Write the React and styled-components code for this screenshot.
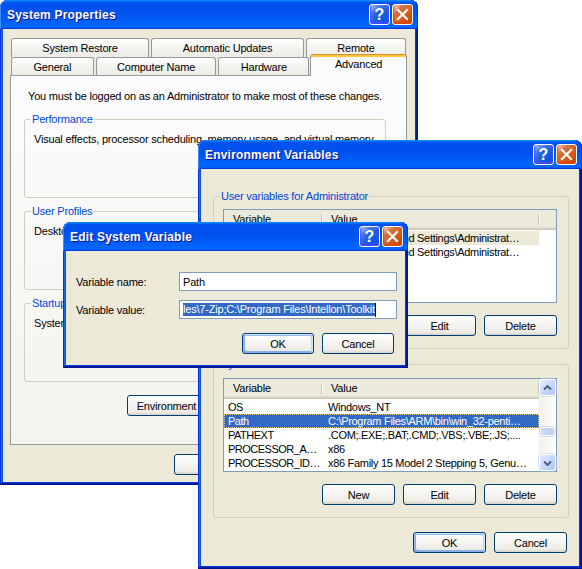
import React from 'react'
import styled, { createGlobalStyle } from 'styled-components'

const GlobalStyle = createGlobalStyle`
    html, body {
        margin: 0;
        padding: 0;
        background: #fff;
    }
    body {
        font-family: "Liberation Sans", Arial, sans-serif;
        font-size: 11px;
        letter-spacing: -0.2px;
        color: #000;
    }
`

const Desktop = styled.div`
    position: relative;
    width: 582px;
    height: 569px;
    overflow: hidden;
    background: #fff;
`

// windows sit on the desktop at their own coordinates
const Frame = styled.div`
    position: absolute;
    left: ${p => p.$x}px;
    top: ${p => p.$y}px;
    width: ${p => p.$w}px;
    height: ${p => p.$h}px;
    box-sizing: border-box;
    display: flex;
    flex-direction: column;
    padding: 0 3px 3px;
    background: #0831d9;
    border-radius: 8px 8px 0 0;
    box-shadow: inset -1px -1px #00138c, inset 1px 1px #0831d9, inset -2px -2px #001ea0, inset 2px 2px #166aee, inset -3px -3px #003bda, inset 3px 3px #0855dd;
`

const TitleBar = styled.div`
    flex: none;
    height: 29px;
    margin: 0 -3px;
    padding: 0 5px 0 7px;
    display: flex;
    align-items: center;
    justify-content: space-between;
    border-radius: 8px 8px 0 0;
    background: linear-gradient(180deg, #0997ff, #0053ee 8%, #0050ee 40%, #06f 88%, #06f 93%, #005bff 95%, #003dd7 96%, #003dd7);
    box-shadow: inset 1px 0 #3c8cfc, inset -1px 0 #003dd7;
`

const Title = styled.span`
    font: bold 12px "Liberation Sans", Arial, sans-serif;
    color: #fff;
    letter-spacing: 0.2px;
    text-shadow: 1px 1px #0f1089;
`

const Controls = styled.div`
    display: flex;
    gap: 2px;
`

const CapButton = styled.div`
    box-sizing: border-box;
    width: 21px;
    height: 21px;
    border: 1px solid #fff;
    border-radius: 3px;
    display: flex;
    align-items: center;
    justify-content: center;
    color: #fff;
    font: bold 16px "Liberation Sans", Arial, sans-serif;
    letter-spacing: 0;
    background-image: ${p => p.$close
        ? 'radial-gradient(circle at 90% 90%, #cc4600 0%, #dc6527 55%, #cd7546 70%, #ffccb2 90%, #fff 100%)'
        : 'radial-gradient(circle at 90% 90%, #0054e9 0%, #2263d5 55%, #4479e4 70%, #a3bbec 90%, #fff 100%)'};
    box-shadow: inset 0 -1px 2px 1px ${p => p.$close ? '#da4600' : '#4646ff'};
`

const Body = styled.div`
    flex: 1;
    display: flex;
    flex-direction: column;
    background: #ece9d8;
    min-height: 0;
`

const PushButton = styled.div`
    box-sizing: border-box;
    flex: none;
    width: ${p => p.$w || 73}px;
    height: 21px;
    display: flex;
    align-items: center;
    justify-content: center;
    white-space: nowrap;
    overflow: hidden;
    border: 1px solid #003c74;
    border-radius: 3px;
    background: linear-gradient(180deg, #fff, #ecebe6 86%, #d6d0c5);
    box-shadow: ${p => p.$primary
        ? 'inset -1px 1px #cee7ff, inset 1px 2px #98b8ea, inset -2px 2px #bcd4f6, inset 1px -1px #89ade4, inset 2px -2px #89ade4'
        : 'none'};
`

const ButtonRow = styled.div`
    display: flex;
    justify-content: flex-end;
    gap: ${p => p.$gap || 8}px;
    margin-top: ${p => p.$top || 0}px;
    padding-right: ${p => p.$right || 0}px;
`

const Group = styled.fieldset`
    margin: ${p => p.$top || 0}px 0 0;
    padding: ${p => p.$pt || 5}px 11px ${p => p.$pb || 12}px 9px;
    border: 1px solid #d0d0bf;
    border-radius: 3px;
    min-width: 0;
`

const Legend = styled.legend`
    padding: 0 1px;
    margin-left: -3px;
    line-height: 13px;
    color: #0046d5;
`

const GroupText = styled.div`
    line-height: 13px;
    white-space: nowrap;
`

/* ---------- System Properties ---------- */

const SysBody = styled(Body)`
    padding: 9px 8px 0 7px;
`

const TabRow = styled.div`
    display: flex;
    gap: 2px;
    padding-left: 1px;
    height: ${p => p.$h}px;
`

const Tab = styled.div`
    box-sizing: border-box;
    width: ${p => p.$w}px;
    display: flex;
    align-items: center;
    justify-content: center;
    border: 1px solid #919b9c;
    border-bottom: none;
    border-radius: 3px 3px 0 0;
    background: linear-gradient(180deg, #fff, #f3f3ef 50%, #ecebe6);
`

const ActiveTab = styled(Tab)`
    position: relative;
    z-index: 1;
    height: 22px;
    margin: -3px 0 -1px -1px;
    padding-bottom: 3px;
    border-top-color: #e68b2c;
    background: #fcfcfe;
    box-shadow: inset 0 2px #ffc83c;
`

const TabPanel = styled.div`
    box-sizing: border-box;
    height: 370px;
    display: flex;
    flex-direction: column;
    padding: 14px 20px 0 13px;
    border: 1px solid #919b9c;
    background: linear-gradient(180deg, #fcfcfe, #f4f3ee);
`

const Notice = styled.div`
    line-height: 13px;
    margin: 0 0 10px 4px;
    white-space: nowrap;
`

const SystemProperties = () => (
    <Window x={0} y={0} w={418} h={485} title="System Properties">
        <SysBody>
            <TabRow $h={19}>
                <Tab $w={138}>System Restore</Tab>
                <Tab $w={153}>Automatic Updates</Tab>
                <Tab $w={100}>Remote</Tab>
            </TabRow>
            <TabRow $h={18}>
                <Tab $w={83}>General</Tab>
                <Tab $w={121}>Computer Name</Tab>
                <Tab $w={91}>Hardware</Tab>
                <ActiveTab $w={97}>Advanced</ActiveTab>
            </TabRow>
            <TabPanel>
                <Notice>You must be logged on as an Administrator to make most of these changes.</Notice>
                <Group $pt={7} $pb={13}>
                    <Legend>Performance</Legend>
                    <GroupText>Visual effects, processor scheduling, memory usage, and virtual memory</GroupText>
                    <ButtonRow $top={17}><PushButton $w={75}>Settings</PushButton></ButtonRow>
                </Group>
                <Group $top={7} $pt={7} $pb={13}>
                    <Legend>User Profiles</Legend>
                    <GroupText>Desktop settings related to your logon</GroupText>
                    <ButtonRow $top={17}><PushButton $w={75}>Settings</PushButton></ButtonRow>
                </Group>
                <Group $top={7} $pt={7} $pb={13}>
                    <Legend>Startup and Recovery</Legend>
                    <GroupText>System startup, system failure, and debugging information</GroupText>
                    <ButtonRow $top={17}><PushButton $w={75}>Settings</PushButton></ButtonRow>
                </Group>
                <ButtonRow $top={13} $gap={9}>
                    <PushButton $w={125}>Environment Variables</PushButton>
                    <PushButton $w={125}>Error Reporting</PushButton>
                </ButtonRow>
            </TabPanel>
            <ButtonRow $top={9} $gap={7}>
                <PushButton>OK</PushButton>
                <PushButton>Cancel</PushButton>
                <PushButton>Apply</PushButton>
            </ButtonRow>
        </SysBody>
    </Window>
)

/* ---------- Environment Variables ---------- */

const EnvBody = styled(Body)`
    padding: 21px 10px 0 12px;
`

const List = styled.div`
    box-sizing: border-box;
    height: 94px;
    display: flex;
    border: 1px solid #7f9db9;
    background: #fff;
`

const ListMain = styled.div`
    flex: 1;
    min-width: 0;
    display: flex;
    flex-direction: column;
    overflow: hidden;
`

const Header = styled.div`
    flex: none;
    height: 20px;
    display: flex;
    margin-bottom: 1px;
    background: #ebeadb;
    box-shadow: inset 0 -1px #cbc7b8, inset 0 -2px #d6d2c2, inset 0 -3px #e2decd;
`

const HeaderCell = styled.div`
    position: relative;
    box-sizing: border-box;
    width: ${p => p.$w}px;
    flex: ${p => p.$w ? 'none' : 1};
    padding-left: 9px;
    line-height: 18px;
    &::after {
        content: '';
        display: ${p => p.$w ? 'block' : 'none'};
        position: absolute;
        right: 0;
        top: 4px;
        bottom: 5px;
        width: 1px;
        background: #c7c5b2;
        box-shadow: 1px 0 #fff;
    }
`

const Row = styled.div`
    flex: none;
    width: 315px;
    height: 14px;
    display: flex;
    line-height: 14px;
    color: ${p => p.$state === 'active' ? '#fff' : '#000'};
    background: ${p => p.$state === 'active' ? '#316ac5' : p.$state === 'inactive' ? '#ece9d8' : 'transparent'};
    outline: ${p => p.$state === 'active' ? '1px dotted #e9c47c' : 'none'};
    outline-offset: -1px;
`

const Cell = styled.div`
    box-sizing: border-box;
    flex: none;
    width: ${p => p.$w}px;
    padding-left: ${p => p.$pad}px;
    letter-spacing: ${p => p.$tight ? -0.5 : -0.3}px;
    white-space: nowrap;
    overflow: hidden;
`

const ScrollBar = styled.div`
    flex: none;
    width: 17px;
    display: flex;
    flex-direction: column;
    background: linear-gradient(90deg, #f3f1ec, #fefefb);
`

const ScrollArrow = styled.div`
    box-sizing: border-box;
    flex: none;
    height: 17px;
    display: flex;
    align-items: center;
    justify-content: center;
    border: 1px solid #fff;
    border-radius: 3px;
    background: linear-gradient(135deg, #e4ecfe, #c4d4fa 60%, #b3c7f3);
    box-shadow: 0 0 0 0.5px #b6c8f0;
`

const Track = styled.div`
    flex: 1;
    display: flex;
    flex-direction: column;
    padding: 0 1px;
`

const Thumb = styled.div`
    box-sizing: border-box;
    height: 9px;
    margin-top: 31px;
    border: 1px solid #fff;
    border-radius: 2px;
    background: linear-gradient(90deg, #cad8fb, #bccefa);
    box-shadow: 0 0 0 0.5px #a9bdec;
`

const Chevron = ({ down }) => (
    <svg width="9" height="6" viewBox="0 0 9 6">
        <path d={down ? 'M1 1.5 L4.5 5 L8 1.5' : 'M1 4.5 L4.5 1 L8 4.5'} fill="none" stroke="#4d6185" strokeWidth="2" />
    </svg>
)

const VarList = ({ rows, scroll }) => (
    <List>
        <ListMain>
            <Header>
                <HeaderCell $w={98}>Variable</HeaderCell>
                <HeaderCell $w={217}>Value</HeaderCell>
                <HeaderCell />
            </Header>
            {rows.map(r => (
                <Row key={r.name} $state={r.state}>
                    <Cell $w={98} $pad={4} $tight>{r.name}</Cell>
                    <Cell $w={217} $pad={6}>{r.value}</Cell>
                </Row>
            ))}
        </ListMain>
        {scroll && <ScrollBar>
            <ScrollArrow><Chevron /></ScrollArrow>
            <Track><Thumb /></Track>
            <ScrollArrow><Chevron down /></ScrollArrow>
        </ScrollBar>}
    </List>
)

const userVars = [
    { name: 'TEMP', value: 'C:\\Documents and Settings\\Administrat…', state: 'inactive' },
    { name: 'TMP', value: 'C:\\Documents and Settings\\Administrat…' },
]

const systemVars = [
    { name: 'OS', value: 'Windows_NT' },
    { name: 'Path', value: 'C:\\Program Files\\ARM\\bin\\win_32-penti…', state: 'active' },
    { name: 'PATHEXT', value: '.COM;.EXE;.BAT;.CMD;.VBS;.VBE;.JS;....' },
    { name: 'PROCESSOR_A…', value: 'x86' },
    { name: 'PROCESSOR_ID…', value: 'x86 Family 15 Model 2 Stepping 5, Genu…' },
]

const EnvironmentVariables = () => (
    <Window x={198} y={140} w={384} h={429} title="Environment Variables">
        <EnvBody>
            <Group $pt={6}>
                <Legend>User variables for Administrator</Legend>
                <VarList rows={userVars} />
                <ButtonRow $top={12}>
                    <PushButton>New</PushButton>
                    <PushButton>Edit</PushButton>
                    <PushButton>Delete</PushButton>
                </ButtonRow>
            </Group>
            <Group $top={9} $pt={7}>
                <Legend>System variables</Legend>
                <VarList rows={systemVars} scroll />
                <ButtonRow $top={12}>
                    <PushButton>New</PushButton>
                    <PushButton>Edit</PushButton>
                    <PushButton>Delete</PushButton>
                </ButtonRow>
            </Group>
            <ButtonRow $top={14} $right={2}>
                <PushButton $primary>OK</PushButton>
                <PushButton>Cancel</PushButton>
            </ButtonRow>
        </EnvBody>
    </Window>
)

/* ---------- Edit System Variable ---------- */

const EditBody = styled(Body)`
    padding: 21px 8px 0 10px;
`

const FieldRow = styled.div`
    display: flex;
    align-items: center;
    margin-top: ${p => p.$top || 0}px;
`

const FieldLabel = styled.div`
    width: 103px;
    flex: none;
`

const TextBox = styled.div`
    box-sizing: border-box;
    width: 218px;
    height: 19px;
    display: flex;
    align-items: center;
    padding-left: ${p => p.$pad || 3}px;
    border: 1px solid #7f9db9;
    background: #fff;
    white-space: nowrap;
    overflow: hidden;
`

const Selection = styled.span`
    background: #316ac5;
    color: #fff;
    line-height: 13px;
`

const Caret = styled.span`
    display: inline-block;
    width: 1px;
    height: 14px;
    background: #000;
`

const EditSystemVariable = () => (
    <Window x={63} y={222} w={345} h={146} title="Edit System Variable">
        <EditBody>
            <FieldRow>
                <FieldLabel>Variable name:</FieldLabel>
                <TextBox>Path</TextBox>
            </FieldRow>
            <FieldRow $top={9}>
                <FieldLabel>Variable value:</FieldLabel>
                <TextBox>
                    <Selection>les\7-Zip;C:\Program Files\Intellon\Toolkit</Selection>
                    <Caret />
                </TextBox>
            </FieldRow>
            <ButtonRow $top={14} $right={3}>
                <PushButton $w={72} $primary>OK</PushButton>
                <PushButton $w={72}>Cancel</PushButton>
            </ButtonRow>
        </EditBody>
    </Window>
)

const Window = ({ x, y, w, h, title, children }) => (
    <Frame $x={x} $y={y} $w={w} $h={h}>
        <TitleBar>
            <Title>{title}</Title>
            <Controls>
                <CapButton>?</CapButton>
                <CapButton $close>
                    <svg width="19" height="19" viewBox="0 0 19 19">
                        <path d="M5 5 L14 14 M14 5 L5 14" stroke="#fff" strokeWidth="2.2" strokeLinecap="square" />
                    </svg>
                </CapButton>
            </Controls>
        </TitleBar>
        {children}
    </Frame>
)

const App = () => (
    <>
        <GlobalStyle />
        <Desktop>
            <SystemProperties />
            <EnvironmentVariables />
            <EditSystemVariable />
        </Desktop>
    </>
)

export default App
